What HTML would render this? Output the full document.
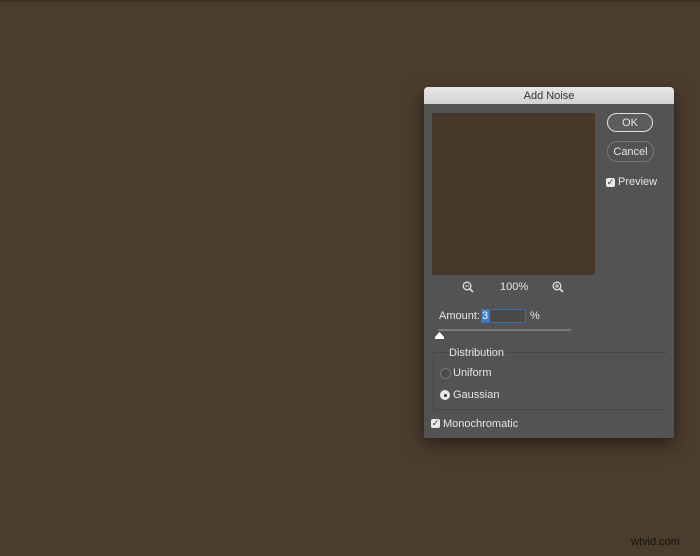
<!DOCTYPE html><html><head><style>
body{margin:0;width:700px;height:556px;background:#4b3d2e;font-family:"Liberation Sans",sans-serif;position:relative;overflow:hidden}
.a{position:absolute}
.t{color:#e6e6e6;font-size:11px}
</style></head><body>
<div class="a" style="left:0;top:0;width:700px;height:2px;background:#3a3026"></div>
<div class="a" style="left:424px;top:87px;width:250px;height:351px;background:#535353;border-radius:4px 4px 2px 2px;box-shadow:0 6px 18px rgba(0,0,0,.5);overflow:hidden">
<div class="a" style="left:0;top:0;width:250px;height:17px;background:linear-gradient(#e6e6e6,#d2d2d2);text-align:center;font-size:11px;line-height:18px;color:#333">Add Noise</div>
</div>
<div class="a" style="left:432px;top:113px;width:163px;height:162px;background:#46392c"></div>
<div class="a t" style="left:607px;top:113px;width:44px;height:17px;border:1.5px solid #e0e0e0;border-radius:10px;text-align:center;line-height:18px;background:#5c5c5c">OK</div>
<div class="a t" style="left:607px;top:141px;width:45px;height:19px;border:1px solid #777;border-radius:10px;text-align:center;line-height:20px">Cancel</div>
<div class="a" style="left:606px;top:178px;width:9px;height:9px;background:#e8e8e8;border-radius:2px;font-size:9px;line-height:9px;text-align:center;color:#333">✓</div>
<div class="a t" style="left:618px;top:176px">Preview</div>
<svg class="a" style="left:462px;top:281px" width="12" height="12"><circle cx="5" cy="5" r="3.8" stroke="#ddd" stroke-width="1.4" fill="none"/><line x1="3" y1="5" x2="7" y2="5" stroke="#ddd"/><line x1="8" y1="8" x2="11" y2="11" stroke="#ddd" stroke-width="1.7"/></svg>
<div class="a t" style="left:500px;top:281px">100%</div>
<svg class="a" style="left:552px;top:281px" width="12" height="12"><circle cx="5" cy="5" r="3.8" stroke="#ddd" stroke-width="1.4" fill="none"/><line x1="3" y1="5" x2="7" y2="5" stroke="#ddd"/><line x1="5" y1="3" x2="5" y2="7" stroke="#ddd"/><line x1="8" y1="8" x2="11" y2="11" stroke="#ddd" stroke-width="1.7"/></svg>
<div class="a t" style="left:439px;top:310px">Amount:</div>
<div class="a" style="left:481px;top:309px;width:43px;height:12px;border:1px solid #3c6fa8;background:#4a4a4a"></div>
<div class="a" style="left:482px;top:310px;width:8px;height:12px;background:#3b7bd0;color:#fff;font-size:11px;line-height:12px">3</div>
<div class="a t" style="left:530px;top:310px">%</div>
<div class="a" style="left:438px;top:329px;width:133px;height:2px;background:#7a7a7a"></div>
<svg class="a" style="left:434px;top:331px" width="11" height="10"><path d="M1 8 L1 6 L5.5 1 L10 6 L10 8 Z" fill="#fff"/></svg>
<div class="a" style="left:433px;top:352px;width:233px;height:56px;border:1px solid #474747;border-right:none"></div>
<div class="a t" style="left:447px;top:347px;background:#535353;padding:0 2px">Distribution</div>
<div class="a" style="left:440px;top:368px;width:9px;height:9px;border:1px solid #777;border-radius:50%;background:#4a4a4a"></div>
<div class="a t" style="left:453px;top:367px">Uniform</div>
<div class="a" style="left:440px;top:390px;width:10px;height:10px;border-radius:50%;background:#e8e8e8"></div>
<div class="a" style="left:443.5px;top:393.5px;width:3px;height:3px;border-radius:50%;background:#333"></div>
<div class="a t" style="left:453px;top:389px">Gaussian</div>
<div class="a" style="left:431px;top:419px;width:9px;height:9px;background:#e8e8e8;border-radius:2px;font-size:9px;line-height:9px;text-align:center;color:#333">✓</div>
<div class="a t" style="left:443px;top:418px">Monochromatic</div>
<div class="a" style="left:631px;top:536px;font-size:11px;color:#111">wtvid.com</div>
</body></html>
